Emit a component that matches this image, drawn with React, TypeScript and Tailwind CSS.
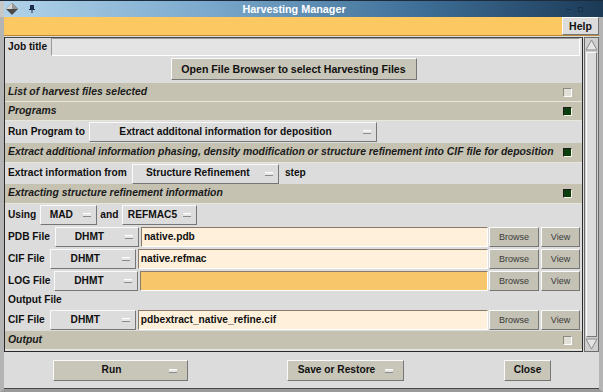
import React from "react";

const raised =
  "border border-t-[#fafafa] border-l-[#fafafa] border-b-[#767676] border-r-[#767676]";
const sunken =
  "border border-t-[#8a7a6a] border-l-[#8a7a6a] border-b-[#ffffff] border-r-[#ffffff]";

function Indicator() {
  return (
    <div className="w-[8px] h-[4px] bg-[#e6e6e6] border-t border-t-white border-b border-b-[#8a8a8a] shrink-0" />
  );
}

function Dropdown({ label, w }: { label: string; w: string }) {
  return (
    <div
      className={`${w} h-[20px] bg-[#dcdcdc] ${raised} flex items-center shrink-0`}
    >
      <div className="flex-1 text-center font-bold pl-[2px] pr-[4px] whitespace-nowrap">
        {label}
      </div>
      <Indicator />
      <div className="w-[5px] shrink-0" />
    </div>
  );
}

function Check({ on }: { on: boolean }) {
  return on ? (
    <div className="w-[9px] h-[9px] bg-[#0c3d0c] border border-t-[#1a1a1a] border-l-[#1a1a1a] border-b-[#f4f4e4] border-r-[#f4f4e4]" />
  ) : (
    <div className="w-[9px] h-[9px] bg-[#e2e0d6] border border-t-[#8a8a80] border-l-[#8a8a80] border-b-[#ffffff] border-r-[#ffffff]" />
  );
}

function Header({ text, on, h }: { text: string; on: boolean; h: string }) {
  return (
    <div
      className={`${h} bg-[#c5c2b2] border-b border-b-[#e8e6dc] flex items-center pl-[3px] pr-[10px] shrink-0`}
    >
      <div className="flex-1 italic font-bold text-[10.4px] text-[#1a1a1a] whitespace-nowrap">
        {text}
      </div>
      <Check on={on} />
    </div>
  );
}

function SmallBtn({ label, w }: { label: string; w: string }) {
  return (
    <div
      className={`${w} h-[20px] bg-[#c4c2b4] ${raised} flex items-center justify-center text-[9px] text-[#3a3a3a] shrink-0`}
    >
      {label}
    </div>
  );
}

function FileRow({
  label,
  ddW,
  gap,
  value,
  orange,
}: {
  label: string;
  ddW: string;
  gap: string;
  value: string;
  orange?: boolean;
}) {
  return (
    <div className="h-[22px] flex items-center pl-[3px] pr-[2px] shrink-0">
      <div className="font-bold whitespace-nowrap">{label}</div>
      <div className={gap} />
      <Dropdown label="DHMT" w={ddW} />
      <div className="w-[2px]" />
      <div
        className={`flex-1 h-[20px] ${
          orange ? "bg-[#f8c66a]" : "bg-[#fff0dc]"
        } ${sunken} flex items-center pl-[2px] font-bold`}
      >
        {value}
      </div>
      <div className="w-[1px]" />
      <SmallBtn label="Browse" w="w-[50px]" />
      <div className="w-[2px]" />
      <SmallBtn label="View" w="w-[39px]" />
    </div>
  );
}

function BottomBtn({
  label,
  w,
  ind,
}: {
  label: string;
  w: string;
  ind?: boolean;
}) {
  return (
    <div
      className={`${w} h-[21px] bg-[#c8c6b8] ${raised} flex items-center font-bold shrink-0`}
    >
      <div className="flex-1 text-center">{label}</div>
      {ind && (
        <>
          <Indicator />
          <div className="w-[10px]" />
        </>
      )}
    </div>
  );
}

export default function App() {
  return (
    <div className="w-[603px] h-[392px] bg-[#a8a8a8] overflow-hidden font-['Liberation_Sans',Arial,sans-serif] text-[10.2px] leading-none text-[#101010] flex flex-col">
      {/* title bar */}
      <div className="h-[17px] flex items-center bg-[linear-gradient(to_right,#b2d4ea,#7aa8cc_35%,#3e6e96_70%,#1c3a56)] border-t border-t-[#1c2c3c] shrink-0 relative">
        <div className="w-[4px] h-full bg-[#c8c8c8]" />
        <svg width="14" height="14" viewBox="0 0 14 14" className="ml-[1px]">
          <polygon points="7,1 13,7 7,13 1,7" fill="#4a4a4a" />
          <polygon points="7,1 13,7 7,7 1,7" fill="#9a9a9a" />
          <polygon points="7,1 7,7 1,7" fill="#d8d8d8" />
        </svg>
        <svg width="8" height="10" viewBox="0 0 8 10" className="ml-[9px]">
          <rect x="2" y="1" width="4" height="4" fill="#1c2c4c" />
          <rect x="1" y="5" width="6" height="1" fill="#1c2c4c" />
          <rect x="3.5" y="6" width="1" height="3" fill="#1c2c4c" />
        </svg>
        <div className="flex-1 text-center text-white font-bold text-[10.8px] pr-[14px]">
          Harvesting Manager
        </div>
        <div className="flex items-center gap-[7px] pr-[8px] opacity-40">
          <div className="w-[5px] h-[1px] bg-[#0c1c2c]" />
          <div className="w-[5px] h-[5px] border border-[#0c1c2c]" />
          <div className="w-[5px] h-[5px]" />
        </div>
      </div>

      <div className="flex-1 flex bg-[#dcdcdc] border-l-[4px] border-l-[#b4b4b4] border-r-[4px] border-r-[#b4b4b4] border-b-[3px] border-b-[#9a9a9a]">
        <div className="flex-1 flex flex-col border-b border-b-[#4a4a4a]">
          {/* menu bar */}
          <div className="h-[19px] flex shrink-0 border-b border-b-[#b88a3a]">
            <div className="flex-1 bg-[#fcc862]" />
            <div
              className={`w-[37px] h-full bg-[#dcdcdc] ${raised} flex items-center justify-center font-bold text-[10.5px]`}
            >
              Help
            </div>
          </div>

          {/* main */}
          <div className="flex mt-[1px] h-[315px] shrink-0">
            <div className="w-[579px] flex flex-col border border-[#2a2a2a] border-t-[#4a4a4a]">
              {/* job title */}
              <div className="h-[19px] flex items-start pl-[3px] pr-[2px] shrink-0">
                <div className="font-bold whitespace-nowrap mt-[4px]">
                  Job title
                </div>
                <div className="w-[4px]" />
                <div className="flex-1 h-[18px] bg-[#e4e4e4] border border-t-[#9a9a9a] border-l-[#9a9a9a] border-b-white border-r-white" />
              </div>
              <div className="h-[26px] flex justify-center items-start pt-[1px] shrink-0">
                <div
                  className={`w-[246px] h-[22px] bg-[#c8c6b8] ${raised} flex items-center justify-center font-bold text-[10.6px]`}
                >
                  Open File Browser to select Harvesting Files
                </div>
              </div>

              <Header
                text="List of harvest files selected"
                on={false}
                h="h-[19px]"
              />
              <Header text="Programs" on={true} h="h-[19px]" />
              <div className="h-[22px] flex items-center pl-[3px] shrink-0">
                <div className="font-bold whitespace-nowrap">Run Program to</div>
                <div className="w-[4px]" />
                <Dropdown
                  label="Extract additonal information for deposition"
                  w="w-[288px]"
                />
              </div>
              <Header
                text="Extract additional information phasing, density modification or structure refinement into CIF file for deposition"
                on={true}
                h="h-[20px]"
              />
              <div className="h-[21px] flex items-center pl-[3px] shrink-0">
                <div className="font-bold whitespace-nowrap">
                  Extract information from
                </div>
                <div className="w-[5px]" />
                <Dropdown label="Structure Refinement" w="w-[147px]" />
                <div className="w-[6px]" />
                <div className="font-bold">step</div>
              </div>
              <Header
                text="Extracting structure refinement information"
                on={true}
                h="h-[20px]"
              />
              <div className="h-[22px] flex items-center pl-[3px] shrink-0">
                <div className="font-bold">Using</div>
                <div className="w-[4px]" />
                <Dropdown label="MAD" w="w-[57px]" />
                <div className="w-[3px]" />
                <div className="font-bold">and</div>
                <div className="w-[4px]" />
                <Dropdown label="REFMAC5" w="w-[75px]" />
              </div>
              <FileRow
                label="PDB File"
                ddW="w-[84px]"
                gap="w-[5px]"
                value="native.pdb"
              />
              <FileRow
                label="CIF File"
                ddW="w-[86px]"
                gap="w-[5px]"
                value="native.refmac"
              />
              <FileRow
                label="LOG File"
                ddW="w-[84px]"
                gap="w-[4px]"
                value=""
                orange
              />
              <div className="h-[17px] flex items-center pl-[3px] font-bold shrink-0">
                Output File
              </div>
              <FileRow
                label="CIF File"
                ddW="w-[86px]"
                gap="w-[5px]"
                value="pdbextract_native_refine.cif"
              />
              <Header text="Output" on={false} h="h-[19px]" />
            </div>

            {/* scrollbar */}
            <div className="w-[15px] ml-[1px] flex flex-col bg-[#cfcfcf] border border-[#6a6a6a]">
              <svg width="13" height="14" viewBox="0 0 13 14">
                <polygon
                  points="6.5,2 12,12 1,12"
                  fill="#e4e4e4"
                  stroke="#8a8a8a"
                  strokeWidth="1"
                />
              </svg>
              <div className={`flex-1 mx-[1px] bg-[#dcdcdc] ${raised}`} />
              <svg width="13" height="14" viewBox="0 0 13 14">
                <polygon
                  points="1,2 12,2 6.5,12"
                  fill="#e4e4e4"
                  stroke="#8a8a8a"
                  strokeWidth="1"
                />
              </svg>
            </div>
          </div>

          {/* bottom buttons */}
          <div className="flex-1 flex items-start pt-[8px]">
            <div className="w-[49px]" />
            <BottomBtn label="Run" w="w-[135px]" ind />
            <div className="w-[99px]" />
            <BottomBtn label="Save or Restore" w="w-[117px]" ind />
            <div className="w-[100px]" />
            <BottomBtn label="Close" w="w-[47px]" />
          </div>
        </div>
      </div>
    </div>
  );
}
